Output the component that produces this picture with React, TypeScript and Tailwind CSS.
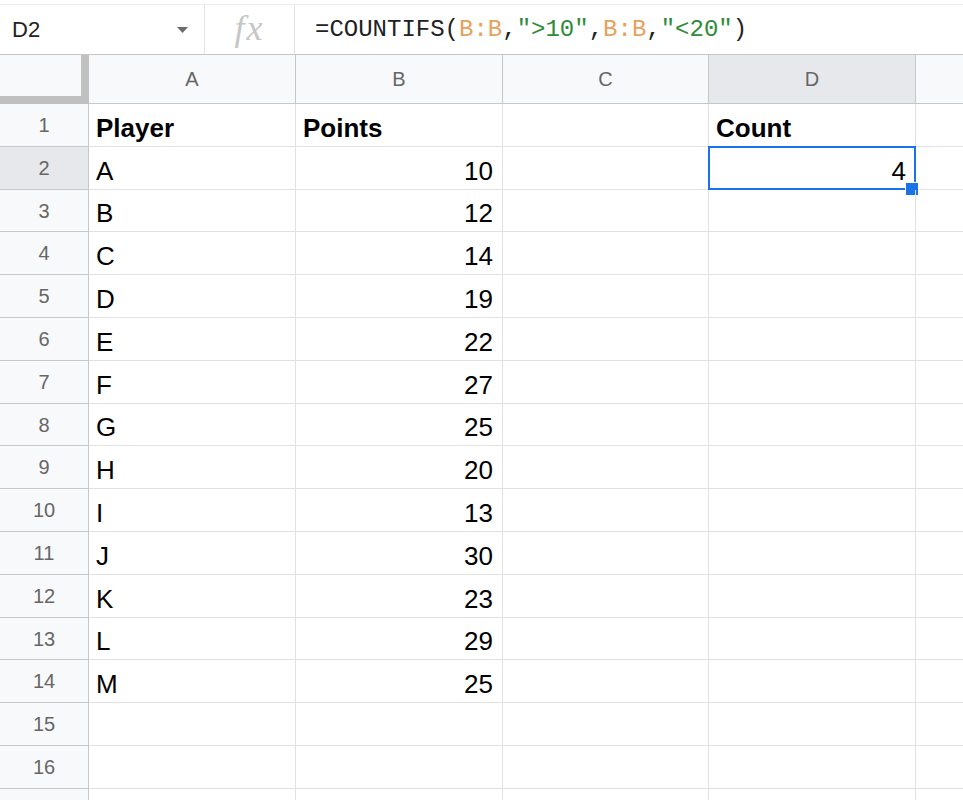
import React from "react";

const rowHeights = [
  "h-[43px]", "h-[43px]", "h-[42px]", "h-[43px]", "h-[43px]", "h-[43px]", "h-[43px]", "h-[42px]",
  "h-[43px]", "h-[43px]", "h-[43px]", "h-[43px]", "h-[42px]", "h-[43px]", "h-[43px]", "h-[43px]",
  "h-[43px]",
];

const data: [string, string, string, string][] = [
  ["Player", "Points", "", "Count"],
  ["A", "10", "", "4"],
  ["B", "12", "", ""],
  ["C", "14", "", ""],
  ["D", "19", "", ""],
  ["E", "22", "", ""],
  ["F", "27", "", ""],
  ["G", "25", "", ""],
  ["H", "20", "", ""],
  ["I", "13", "", ""],
  ["J", "30", "", ""],
  ["K", "23", "", ""],
  ["L", "29", "", ""],
  ["M", "25", "", ""],
  ["", "", "", ""],
  ["", "", "", ""],
  ["", "", "", ""],
];

const colW = ["w-[207px]", "w-[207px]", "w-[206px]", "w-[207px]"];

function FormulaBar() {
  return (
    <div className="h-[51px] mt-[4px] bg-white border-t border-t-[#ececec] border-b border-b-[#c7c7c7] flex items-center">
      <div className="w-[205px] h-full flex items-center pl-[12px] pr-[16px] border-r border-r-[#e3e3e3]">
        <span className="text-[22px] text-[#222] font-['Liberation_Sans',Arial,sans-serif] flex-1">D2</span>
        <svg width="11" height="6" viewBox="0 0 11 6">
          <path d="M0 0 L11 0 L5.5 6 Z" fill="#6b6b6b" />
        </svg>
      </div>
      <div className="w-[90px] h-full flex items-center justify-center border-r border-r-[#e3e3e3]">
        <span className="text-[36px] italic text-[#c6c6c6] tracking-[2px] font-['Liberation_Serif','Times_New_Roman',serif] leading-none mb-[4px]">fx</span>
      </div>
      <div className="pl-[20px] text-[24px] font-['Liberation_Mono','Courier_New',monospace] text-[#202124] leading-none whitespace-pre">
        <span>=COUNTIFS(</span>
        <span className="text-[#e9a15a]">B:B</span>
        <span>,</span>
        <span className="text-[#2f8a3a]">"&gt;10"</span>
        <span>,</span>
        <span className="text-[#e9a15a]">B:B</span>
        <span>,</span>
        <span className="text-[#2f8a3a]">"&lt;20"</span>
        <span>)</span>
      </div>
    </div>
  );
}

function HeaderRow() {
  const letters = ["A", "B", "C", "D"];
  return (
    <div className="flex h-[49px]">
      <div className="w-[89px] h-full bg-[#f8f9fa] flex">
        <div className="w-[81px] h-full flex flex-col">
          <div className="h-[41px] bg-[#f8f9fa]" />
          <div className="h-[8px] bg-[#c0c0c0]" />
        </div>
        <div className="w-[8px] h-full bg-[#c0c0c0]" />
      </div>
      {letters.map((l, i) => (
        <div
          key={l}
          className={`${colW[i]} h-full flex items-center justify-center border-r border-r-[#c7c7c7] border-b border-b-[#c7c7c7] text-[20px] text-[#666] font-['Liberation_Sans',Arial,sans-serif] ${
            l === "D" ? "bg-[#e6e8eb]" : "bg-[#f8f9fa]"
          }`}
        >
          {l}
        </div>
      ))}
      <div className="flex-1 h-full bg-[#f8f9fa] border-b border-b-[#c7c7c7]" />
    </div>
  );
}

export default function App() {
  return (
    <div className="w-[963px] h-[800px] bg-white overflow-hidden font-['Liberation_Sans',Arial,sans-serif]">
      <FormulaBar />
      <HeaderRow />
      {data.map((row, r) => (
        <div key={r} className={`flex shrink-0 ${rowHeights[r]}`}>
          <div
            className={`w-[89px] h-full flex items-center justify-center border-r border-r-[#c7c7c7] border-b border-b-[#c7c7c7] text-[20px] text-[#666] ${
              r === 1 ? "bg-[#e6e8eb]" : "bg-[#f8f9fa]"
            }`}
          >
            {r < 16 ? r + 1 : ""}
          </div>
          {row.map((v, c) => {
            const bold = r === 0;
            const right = !bold && (c === 1 || c === 3);
            const selected = r === 1 && c === 3;
            return (
              <div
                key={c}
                className={`${colW[c]} h-full relative flex items-end pb-[5px] border-r border-r-[#e2e2e2] border-b border-b-[#e2e2e2] ${
                  right ? "justify-end pr-[9px]" : "justify-start pl-[7px]"
                }`}
              >
                <span className={`text-[26px] leading-none text-black ${bold ? "font-bold" : ""}`}>{v}</span>
                {selected && (
                  <>
                    <div className="absolute left-[-1px] top-[-1px] right-[-1px] bottom-[-1px] border-[2px] border-[#1a73e8]" />
                    <div className="absolute right-[-4px] bottom-[-7px] w-[14px] h-[14px] bg-[#1a73e8] border border-white" />
                  </>
                )}
              </div>
            );
          })}
          <div className="flex-1 h-full border-b border-b-[#e2e2e2]" />
        </div>
      ))}
    </div>
  );
}
